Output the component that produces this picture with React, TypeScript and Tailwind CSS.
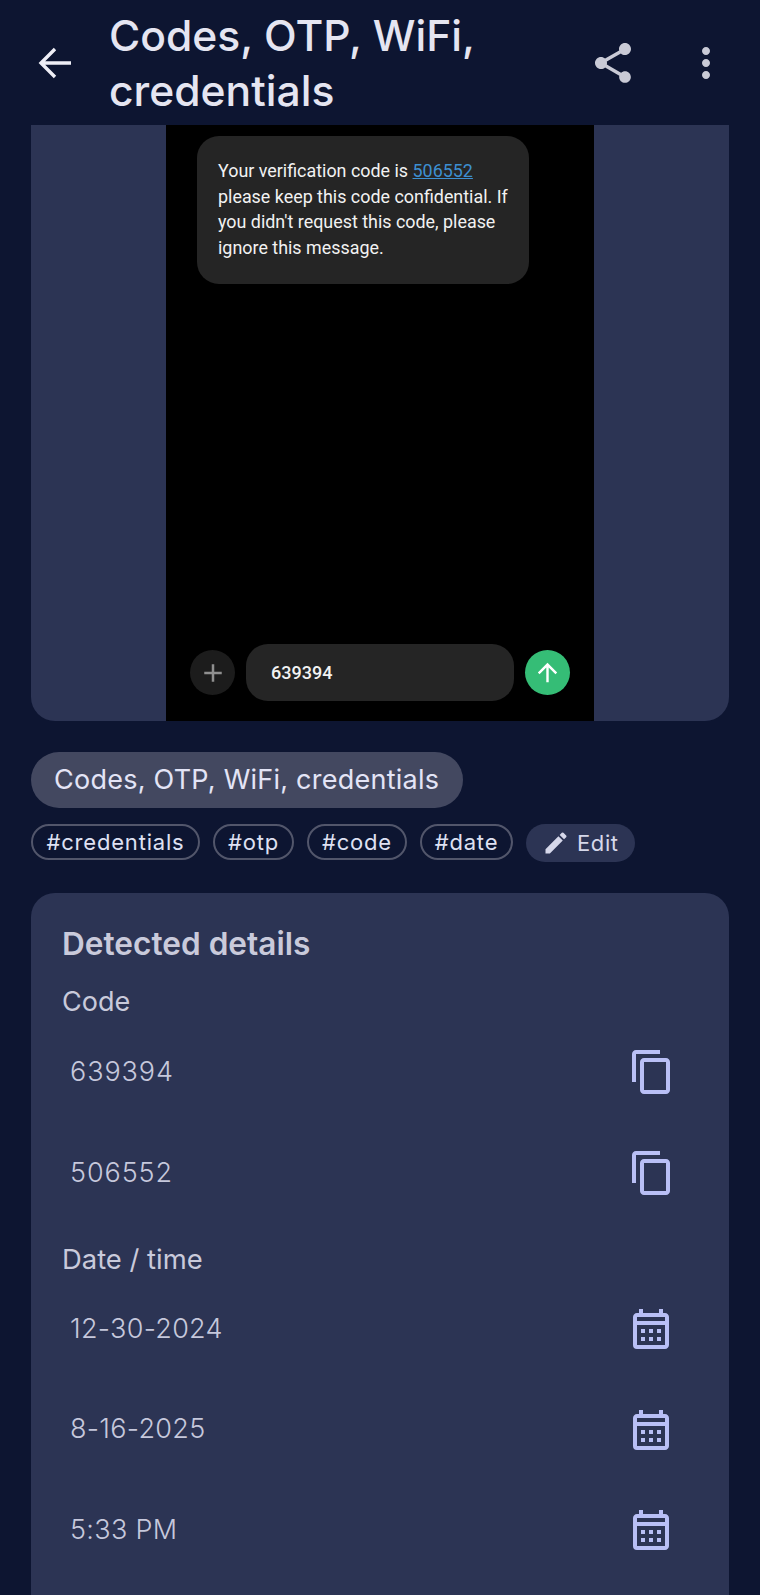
import { MdShare, MdMoreVert, MdEdit, MdContentCopy, MdOutlineCalendarMonth, MdAdd, MdArrowUpward } from "react-icons/md";

const tags = [
  { t: "#credentials", w: "w-[169px]" },
  { t: "#otp", w: "w-[81px]" },
  { t: "#code", w: "w-[100px]" },
  { t: "#date", w: "w-[93px]" },
];

function Row({ text, kind, h, track }: { text: string; kind: "copy" | "cal"; h: string; track: string }) {
  return (
    <div className={`flex items-center justify-between pl-[8px] ${kind === "copy" ? "pr-[22px]" : "pr-[23px]"} ${h}`}>
      <span className={`text-[27px] font-light text-[#c6c8dc] ${track}`}>{text}</span>
      {kind === "copy" ? (
        <MdContentCopy className="text-[48px] text-[#b9bff6]" />
      ) : (
        <MdOutlineCalendarMonth className="text-[48px] text-[#b9bff6]" />
      )}
    </div>
  );
}

export default function App() {
  return (
    <div className="h-[1595px] w-[760px] overflow-hidden bg-[#0d1531] font-['Inter','Noto_Sans',sans-serif]">
      <header className="flex h-[125px] items-center pl-[31px] pr-[30px]">
        <svg viewBox="0 0 24 24" className="h-[48px] w-[48px] shrink-0 text-[#eeeef6]" fill="none" stroke="currentColor" strokeWidth="1.7">
          <path d="M20 12H5.2M12 5 5 12l7 7" />
        </svg>
        <h1 className="ml-[30px] w-[420px] text-[42.6px] font-medium leading-[55px] text-[#e5e5f1]">
          Codes, OTP, WiFi, credentials
        </h1>
        <MdShare className="ml-[60px] shrink-0 text-[48px] text-[#c9cad6]" />
        <MdMoreVert className="ml-[45px] shrink-0 text-[48px] text-[#c9cad6]" />
      </header>

      <main className="px-[31px]">
        <section className="flex h-[596px] justify-center overflow-hidden rounded-b-[24px] bg-[#2c3454]">
          <div className="flex w-[428px] flex-col justify-between bg-black pb-[20px] pl-[24px] pr-[24px] pt-[11px] font-['Roboto',sans-serif]">
            <div className="ml-[7px] h-[148px] w-[332px] rounded-[22px] bg-[#252525] px-[21px] pt-[22px] text-[17.9px] leading-[25.6px] text-[#f2f2f2]">
              Your verification code is <span className="text-[#3d8fd1] underline">506552</span> please keep this code
              confidential. If you didn't request this code, please ignore this message.
            </div>
            <div className="flex items-center">
              <div className="flex h-[45px] w-[45px] items-center justify-center rounded-full bg-[#1c1c1c]">
                <MdAdd className="text-[30px] text-[#8f8f8f]" />
              </div>
              <div className="ml-[11px] flex h-[57px] w-[268px] items-center rounded-[22px] bg-[#252525] pl-[25px] text-[18px] font-medium text-[#f2f2f2]">
                639394
              </div>
              <div className="ml-[11px] flex h-[45px] w-[45px] items-center justify-center rounded-full bg-[#35bd76]">
                <MdArrowUpward className="text-[29px] text-white" />
              </div>
            </div>
          </div>
        </section>

        <div className="mt-[31px] flex h-[56px] w-[432px] items-center rounded-full bg-[#434860] pl-[23px] pt-[1px] text-[27px] tracking-[0.25px] text-[#e3e4f6]">
          Codes, OTP, WiFi, credentials
        </div>

        <div className="mt-[16px] flex items-start gap-[13px]">
          {tags.map((x) => (
            <div
              key={x.t}
              className={`flex h-[36px] items-center justify-center rounded-full border-2 border-[#52566b] text-[22px] tracking-[0.8px] text-[#dfe1f3] ${x.w}`}
            >
              {x.t}
            </div>
          ))}
          <div className="flex h-[38px] w-[109px] items-center rounded-full bg-[#2c3454] pl-[16px] text-[22px] tracking-[0.6px] text-[#d6d8ea]">
            <MdEdit className="mr-[7px] text-[28px]" />
            Edit
          </div>
        </div>

        <section className="mt-[31px] h-[800px] rounded-[24px] bg-[#2c3454] px-[31px] pt-[33px]">
          <h2 className="text-[31.6px] font-semibold leading-[36px] text-[#c9cadb]">Detected details</h2>
          <h3 className="mt-[23px] text-[27px] leading-[34px] text-[#c9cadb]">Code</h3>
          <Row text="639394" kind="copy" h="mt-[3px] h-[100px]" track="tracking-[0.9px]" />
          <Row text="506552" kind="copy" h="mt-[1px] h-[100px]" track="tracking-[0.9px]" />
          <h3 className="mt-[19px] text-[27.4px] leading-[34px] text-[#c9cadb]">Date / time</h3>
          <Row text="12-30-2024" kind="cal" h="mt-[3px] h-[100px]" track="tracking-[0.3px]" />
          <Row text="8-16-2025" kind="cal" h="h-[101px]" track="tracking-[0.3px]" />
          <Row text="5:33 PM" kind="cal" h="h-[100px]" track="tracking-[0.3px]" />
        </section>
      </main>
    </div>
  );
}
